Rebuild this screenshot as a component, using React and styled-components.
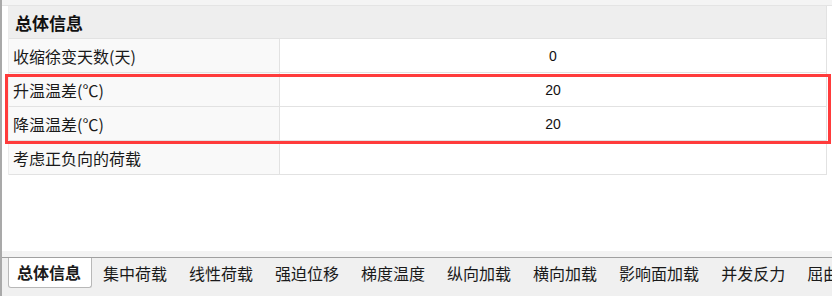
import styled, { createGlobalStyle } from "styled-components";

const GlobalStyle = createGlobalStyle`
  body {
    margin: 0;
    background: #ffffff;
    font-family: "Noto Sans CJK SC", "Liberation Sans", sans-serif;
  }
`;

const Panel = styled.div`
  width: 830px;
  height: 296px;
  border-left: 2px solid #a9a9a9;
  background: #f0f0f0;
  display: flex;
  flex-direction: column;
`;

const TopStrip = styled.div`
  height: 5px;
  background: #f4f4f4;
  border-bottom: 1px solid #e4e4e4;
`;

const Content = styled.div`
  flex: 1;
  background: #ffffff;
  padding: 0 5px 0 6px;
  border-bottom: 6px solid #f3f3f3;
`;

const Table = styled.div`
  width: 817px;
  border-right: 1px solid #e2e2e2;
  border-left: 1px solid #ececec;
  display: flex;
  flex-direction: column;
`;

const HeaderRow = styled.div`
  height: 33px;
  box-sizing: border-box;
  background: #eeeeee;
  border-bottom: 1px solid #e2e2e2;
  display: flex;
  align-items: center;
  padding-left: 6px;
  font-size: 17px;
  font-weight: 700;
  color: #111;
`;

const Row = styled.div`
  height: 34px;
  box-sizing: border-box;
  display: grid;
  grid-template-columns: 271px 1fr;
  border-bottom: 1px solid #e2e2e2;
`;

const Label = styled.div`
  background: #f9f9f9;
  border-right: 1px solid #e2e2e2;
  display: flex;
  align-items: center;
  padding-left: 4px;
  font-size: 16px;
  color: #1a1a1a;
  white-space: nowrap;
`;

const Value = styled.div`
  display: flex;
  align-items: center;
  justify-content: center;
  font-family: "Liberation Sans", "Noto Sans CJK SC", sans-serif;
  font-size: 14px;
  color: #111;
`;

const Highlight = styled.div`
  position: relative;
  &::after {
    content: "";
    position: absolute;
    top: 1px;
    left: -4px;
    right: -5px;
    bottom: -3px;
    border: 3px solid #ff3b3b;
    pointer-events: none;
  }
`;

const TabBar = styled.div`
  height: 39px;
  box-sizing: border-box;
  border-top: 1px solid #a0a0a0;
  display: flex;
  align-items: flex-start;
  padding-left: 6px;
  overflow: hidden;
  white-space: nowrap;
`;

const Tab = styled.div`
  flex-shrink: 0;
  height: 30px;
  box-sizing: border-box;
  display: flex;
  align-items: center;
  font-size: 16px;
  color: #1a1a1a;
  padding: ${(p) => (p.active ? "0 10px 0 8px" : "0 11px")};
  font-weight: ${(p) => (p.active ? 700 : 400)};
  background: ${(p) => (p.active ? "#ffffff" : "transparent")};
  margin-top: ${(p) => (p.active ? "-1px" : "0")};
  height: ${(p) => (p.active ? "31px" : "30px")};
  border: ${(p) => (p.active ? "1px solid #b8b8b8" : "none")};
  border-top: none;
  border-radius: 0 0 3px 3px;
`;

const rows = [
  { label: "收缩徐变天数(天)", value: "0" },
  { label: "升温温差(℃)", value: "20", mark: true },
  { label: "降温温差(℃)", value: "20", mark: true },
  { label: "考虑正负向的荷载", value: "" },
];

const tabs = [
  "总体信息",
  "集中荷载",
  "线性荷载",
  "强迫位移",
  "梯度温度",
  "纵向加载",
  "横向加载",
  "影响面加载",
  "并发反力",
  "屈曲分析",
];

function DataRow({ item }) {
  return (
    <Row>
      <Label>{item.label}</Label>
      <Value>{item.value}</Value>
    </Row>
  );
}

export default function App() {
  const marked = rows.filter((r) => r.mark);
  return (
    <>
      <GlobalStyle />
      <Panel>
        <TopStrip />
        <Content>
          <Table>
            <HeaderRow>总体信息</HeaderRow>
            <DataRow item={rows[0]} />
            <Highlight>
              {marked.map((r) => (
                <DataRow key={r.label} item={r} />
              ))}
            </Highlight>
            <DataRow item={rows[3]} />
          </Table>
        </Content>
        <TabBar>
          {tabs.map((t, i) => (
            <Tab key={t} active={i === 0}>
              {t}
            </Tab>
          ))}
        </TabBar>
      </Panel>
    </>
  );
}
